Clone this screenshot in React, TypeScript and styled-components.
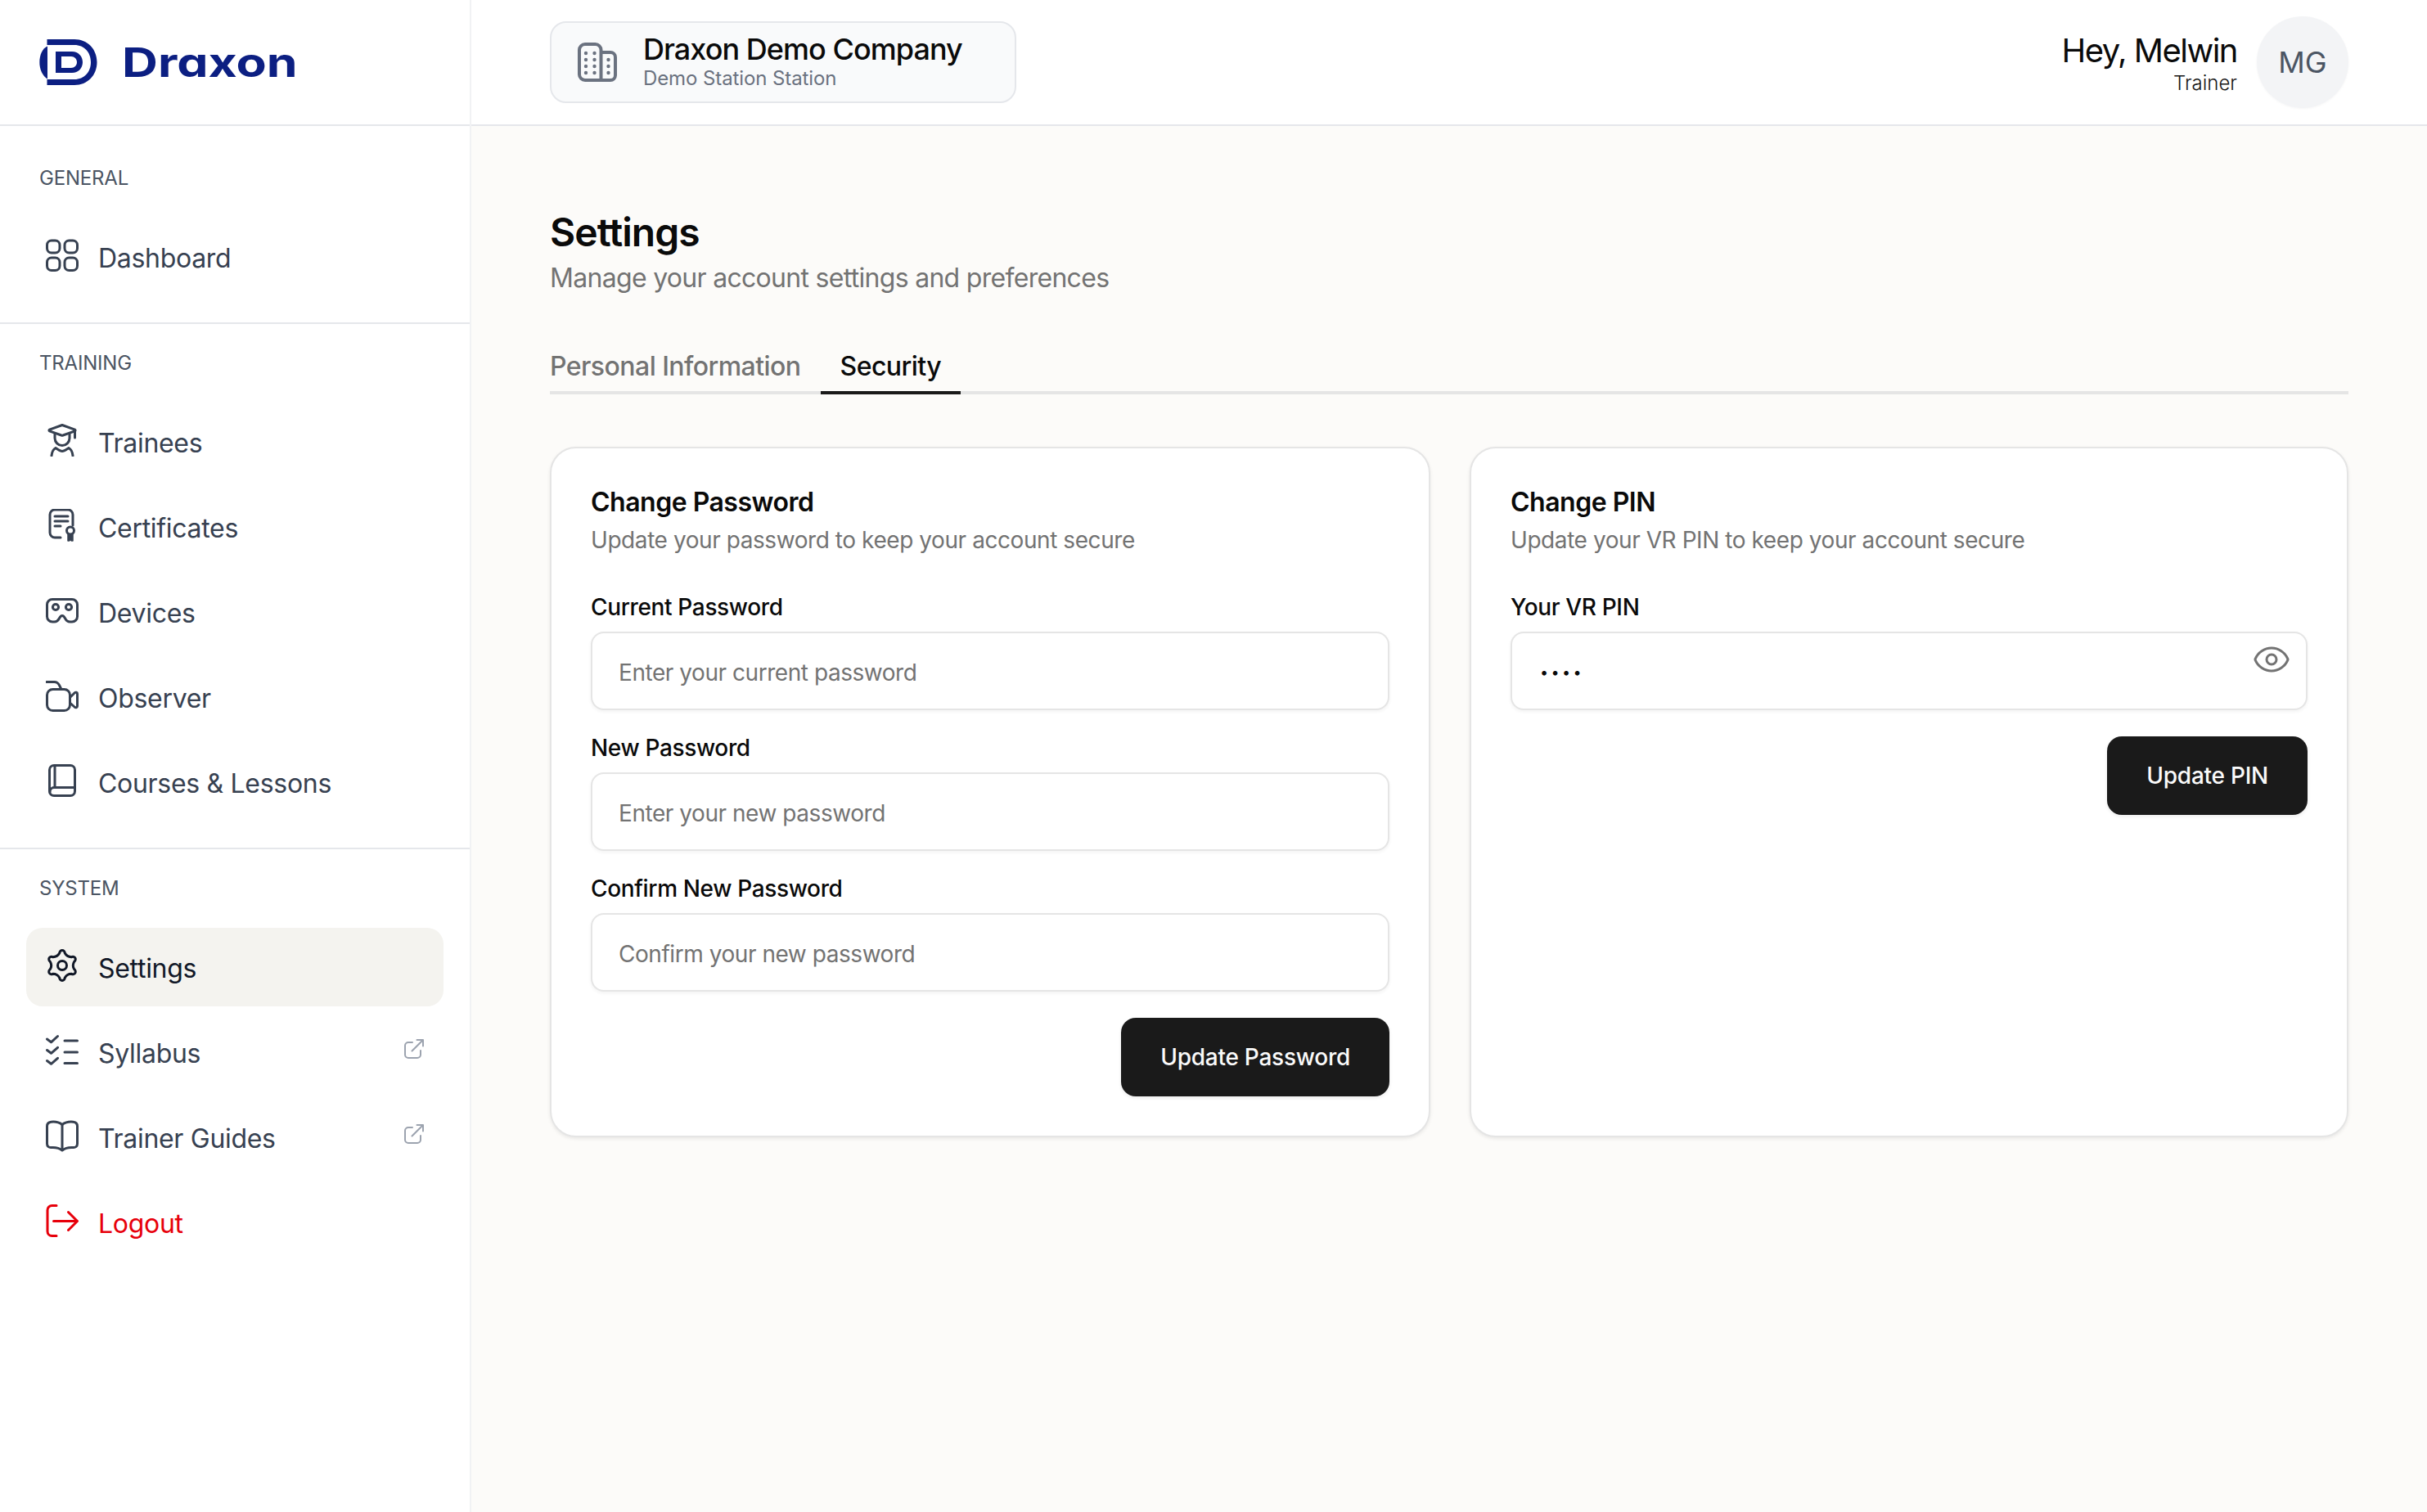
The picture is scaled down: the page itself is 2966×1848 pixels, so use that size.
import React from 'react';
import styled, { createGlobalStyle } from 'styled-components';
import { Eye } from 'lucide-react';

const GlobalStyle = createGlobalStyle`
  html, body {
    margin: 0;
    padding: 0;
    background: #ffffff;
  }
  body {
    font-family: Inter, "Liberation Sans", sans-serif;
    color: #0a0a0a;
  }
  * {
    box-sizing: border-box;
  }
`;

const polar = (r: number, deg: number) => {
  const a = (deg * Math.PI) / 180;
  return [20 + r * Math.cos(a), 20 + r * Math.sin(a)];
};

// six rounded lobes joined by shallow valleys
const gearPath = () => {
  const fmt = (p: number[]) => `${p[0].toFixed(2)} ${p[1].toFixed(2)}`;
  const tip = 3.2;
  const mid = 15.2;
  let d = '';
  for (let i = 0; i < 6; i++) {
    const deg = -90 + i * 60;
    const [cx, cy] = polar(mid, deg);
    const perp = ((deg + 90) * Math.PI) / 180;
    const dx = tip * Math.cos(perp);
    const dy = tip * Math.sin(perp);
    const start = [cx - dx, cy - dy];
    const end = [cx + dx, cy + dy];
    d += i === 0 ? `M${fmt(start)}` : `L${fmt(start)}`;
    d += `A${tip} ${tip} 0 0 1 ${fmt(end)}`;
    d += `Q${fmt(polar(11.8, deg + 30))} `;
    const nextDeg = deg + 60;
    const [nx, ny] = polar(mid, nextDeg);
    const nextPerp = ((nextDeg + 90) * Math.PI) / 180;
    d += `${(nx - tip * Math.cos(nextPerp)).toFixed(2)} ${(ny - tip * Math.sin(nextPerp)).toFixed(2)}`;
  }
  return `${d}Z`;
};

const Glyph = styled.svg`
  width: 40px;
  height: 40px;
  flex: none;
  margin-bottom: 8px;
  fill: none;
  stroke: currentColor;
  stroke-width: 3;
  stroke-linecap: round;
  stroke-linejoin: round;
`;

const DashboardIcon = () => (
  <Glyph viewBox="0 0 40 40">
    <rect x="1.5" y="2" width="15.5" height="15" rx="5.5" />
    <rect x="23" y="2" width="15.5" height="15" rx="5.5" />
    <rect x="1.5" y="23" width="15.5" height="15.5" rx="5.5" />
    <rect x="23" y="23" width="15.5" height="15.5" rx="5.5" />
  </Glyph>
);

const TraineesIcon = () => (
  <Glyph viewBox="0 0 40 40">
    <path d="M20 1.5 35.5 7.2c.8.4.8 1.2 0 1.6L21 14c-.7.2-1.3.2-2 0L4.5 8.8c-.8-.4-.8-1.2 0-1.6L20 1.5Z" />
    <path d="M35.5 8v9" />
    <path d="M11 12.5v5a9 9 0 0 0 18 0v-5" />
    <path d="M7 39c.4-4 2.200-8 5-9.500 2.800 1.800 5.500 4 8 4s5.200-2.200 8-4c2.800 1.500 4.600 5.500 5 9.500" />
  </Glyph>
);

const CertificatesIcon = () => (
  <Glyph viewBox="0 0 40 40">
    <path d="M18 35H11a6 6 0 0 1-6-6V7a6 6 0 0 1 6-6h16a6 6 0 0 1 6 6v13" />
    <path d="M11 9h16M11 15h16M11 21h7" />
    <circle cx="30" cy="26.5" r="4.5" />
    <path d="M27 31v8h1.6l1.4-1.6 1.4 1.6H33v-8" fill="currentColor" strokeWidth="1.5" />
  </Glyph>
);

const DevicesIcon = () => (
  <Glyph viewBox="0 0 40 40">
    <path d="M8 6.5h24a6.5 6.5 0 0 1 6.5 6.5v14.5a6.5 6.5 0 0 1-6.5 6.5h-2.5c-3 0-4.6-1.7-5.8-4-1-2-2.1-3.5-3.7-3.5s-2.7 1.5-3.7 3.5c-1.2 2.3-2.8 4-5.8 4H8a6.5 6.5 0 0 1-6.5-6.5V13A6.5 6.5 0 0 1 8 6.5Z" />
    <circle cx="12" cy="16" r="3.6" />
    <circle cx="28" cy="16" r="3.6" />
  </Glyph>
);

const ObserverIcon = () => (
  <Glyph viewBox="0 0 40 40">
    <path d="M1 3.5h9.5c2.6 0 4.6 1.4 6 4l2.5 5" />
    <rect x="1.5" y="12.5" width="28" height="26" rx="7" />
    <path d="M29.5 22.5 35 17c1.4-1.4 3.5-.8 3.5 1v15c0 1.800-2.100 2.400-3.500 1l-5.500-5" />
  </Glyph>
);

const CoursesIcon = () => (
  <Glyph viewBox="0 0 40 40">
    <rect x="4.5" y="1.5" width="31" height="37" rx="5.5" />
    <path d="M11 2v26" />
    <path d="M5 34c0-3 2-5.5 5-5.5h25.5" />
  </Glyph>
);

const SettingsIcon = () => (
  <Glyph viewBox="0 0 40 40">
    <path d={gearPath()} />
    <circle cx="20" cy="20" r="5.5" />
  </Glyph>
);

const SyllabusIcon = () => (
  <Glyph viewBox="0 0 40 40">
    <path d="M1.5 6l5 3.8L14.5 2.5" />
    <path d="M1.5 19.5l5 3.8 8-7" />
    <path d="M1.5 32.5l5 3.8 8-7" />
    <path d="M23 8h15.5M23 22h15.5M23 35.5h15.5" />
  </Glyph>
);

const GuidesIcon = () => (
  <Glyph viewBox="0 0 40 40">
    <path d="M20 6.5C16 3.5 11 2.7 6.5 3.2 3.5 3.5 1.5 5.5 1.5 8.5V30c0 3 2.2 4.8 5 4.6 5-.4 9.5.2 13.5 3.4 4-3.2 8.5-3.8 13.5-3.4 2.8.2 5-1.6 5-4.6V8.5c0-3-2-5-5-5.3C29 2.7 24 3.5 20 6.5Z" />
    <path d="M20 6.5v31" />
  </Glyph>
);

const LogoutIcon = () => (
  <Glyph viewBox="0 0 40 40">
    <path d="M13 1.5H7.5A5.5 5.5 0 0 0 2 7v26a5.5 5.5 0 0 0 5.5 5.5H13" />
    <path d="M9.5 20.5h28M27.5 9.5l11 11-11 11" />
  </Glyph>
);

const ExternalGlyph = styled.svg`
  width: 24px;
  height: 24px;
  flex: none;
  margin-left: auto;
  margin-bottom: 12px;
  fill: none;
  stroke: #9ca3af;
  stroke-width: 2;
  stroke-linecap: round;
  stroke-linejoin: round;
`;

const ExternalIcon = () => (
  <ExternalGlyph viewBox="0 0 24 24">
    <path d="M10 4H5a4 4 0 0 0-4 4v11a4 4 0 0 0 4 4h11a4 4 0 0 0 4-4v-5" />
    <path d="M9.5 14.5 22.5 1.5M15.500 1H23v7.500" />
  </ExternalGlyph>
);

const LogoMark = () => (
  <svg width="72" height="58" viewBox="47 47 72 58" fill="#0c1f82" fillRule="evenodd">
    <path d="M57.5 48H91C107 48 118.5 60 118.5 76S107 104 91 104H57.5V97H91C103 97 111 88 111 76S103 55 91 55H57.5Z" />
    <path d="M58 56.5C52 59 48.3 67 48.3 76S52 93 58 96.5Z" />
    <path d="M68 63H88C96 63 101 69 101 76S96 89 88 89H68ZM75 69V83H87C91 83 94 80 94 76S91 69 87 69Z" />
  </svg>
);

const BuildingIcon = () => (
  <svg width="48" height="48" viewBox="0 0 48 48" fill="none" stroke="#6b7280" strokeWidth="4" strokeLinejoin="round">
    <path d="M28.5 46H9a7 7 0 0 1-7-7V9a7 7 0 0 1 7-7h12.5a7 7 0 0 1 7 7v37Z" />
    <path d="M28.5 12H40a6 6 0 0 1 6 6v22a6 6 0 0 1-6 6H28.5" />
    <g fill="#6b7280" stroke="none">
      {[13, 21, 29, 37].map((y) => (
        <React.Fragment key={y}>
          <circle cx="10" cy={y} r="2.2" />
          <circle cx="20.5" cy={y} r="2.2" />
        </React.Fragment>
      ))}
      {[21, 29, 37].map((y) => (
        <circle key={y} cx="37.5" cy={y} r="2.2" />
      ))}
    </g>
  </svg>
);

const Page = styled.div`
  display: grid;
  grid-template-columns: 576px 1fr;
  width: 100%;
  min-height: 1848px;
`;

const Sidebar = styled.aside`
  display: flex;
  flex-direction: column;
  background: #ffffff;
  border-right: 2px solid #f1f2f4;
`;

const Brand = styled.div`
  display: flex;
  align-items: center;
  gap: 30px;
  height: 154px;
  padding-left: 47px;
  border-bottom: 2px solid #e5e7eb;
`;

const BrandName = styled.span`
  display: inline-block;
  width: 209px;
  font-family: Inter, sans-serif;
  font-size: 49px;
  font-weight: 700;
  line-height: 1;
  color: #0c1f82;
  font-feature-settings: 'cv11' 1;
  transform: scaleX(1.24);
  transform-origin: left center;
  white-space: nowrap;
`;

const Section = styled.section<{ $first?: boolean; $last?: boolean }>`
  padding: ${({ $first }) => ($first ? '48px' : '32px')} 32px 32px;
  border-bottom: ${({ $last }) => ($last ? 'none' : '2px solid #e5e7eb')};
`;

const SectionLabel = styled.div`
  padding-left: 16px;
  margin-bottom: 32px;
  font-size: 24px;
  line-height: 32px;
  letter-spacing: -0.2px;
  color: #4b5563;
`;

const NavList = styled.nav`
  display: flex;
  flex-direction: column;
  gap: 8px;
`;

const NavItem = styled.a<{ $active?: boolean; $danger?: boolean }>`
  display: flex;
  align-items: center;
  gap: 24px;
  height: 96px;
  padding: 4px 24px 0;
  border-radius: 20px;
  font-size: 32px;
  line-height: 48px;
  letter-spacing: -0.3px;
  background: ${({ $active }) => ($active ? '#f4f3ef' : 'transparent')};
  color: ${({ $active, $danger }) => ($danger ? '#e7000b' : $active ? '#111827' : '#374151')};
`;

const Main = styled.div`
  display: flex;
  flex-direction: column;
  min-width: 0;
  background: #fcfbf9;
`;

const TopBar = styled.header`
  display: flex;
  align-items: center;
  justify-content: space-between;
  height: 154px;
  padding: 0 96px;
  background: #ffffff;
  border-bottom: 2px solid #e5e7eb;
`;

const CompanyCard = styled.div`
  display: flex;
  align-items: center;
  gap: 32px;
  width: 570px;
  height: 100px;
  padding: 0 32px;
  background: #f9fafb;
  border: 2px solid #e5e7eb;
  border-radius: 20px;
`;

const CompanyText = styled.div`
  display: flex;
  flex-direction: column;
`;

const CompanyName = styled.div`
  font-size: 36px;
  line-height: 40px;
  font-weight: 500;
  letter-spacing: -0.95px;
  color: #0a0a0a;
`;

const CompanySub = styled.div`
  font-size: 24px;
  line-height: 32px;
  letter-spacing: -0.1px;
  color: #6b7280;
`;

const UserBox = styled.div`
  display: flex;
  align-items: center;
  gap: 24px;
`;

const UserText = styled.div`
  padding-top: 3px;
  text-align: right;
`;

const UserGreeting = styled.div`
  font-size: 40px;
  line-height: 48px;
  font-weight: 400;
  letter-spacing: -1.5px;
  color: #0a0a0a;
`;

const UserRole = styled.div`
  font-size: 24px;
  line-height: 32px;
  font-weight: 300;
  color: #171717;
`;

const Avatar = styled.div`
  display: flex;
  align-items: center;
  justify-content: center;
  width: 112px;
  height: 112px;
  border-radius: 50%;
  background: #f3f4f6;
  box-shadow: 0 1px 3px rgba(0, 0, 0, 0.04);
  font-size: 36px;
  color: #4b5563;
`;

const Content = styled.main`
  padding: 98px 96px 96px;
`;

const PageTitle = styled.h1`
  margin: 0;
  font-size: 48px;
  line-height: 64px;
  font-weight: 600;
  letter-spacing: -0.95px;
  color: #0a0a0a;
`;

const PageSub = styled.p`
  margin: 0;
  font-size: 32px;
  line-height: 48px;
  letter-spacing: -0.7px;
  color: #737373;
`;

const TabList = styled.div`
  display: flex;
  margin-top: 46px;
  border-bottom: 4px solid #e5e5e5;
`;

const Tab = styled.div<{ $active?: boolean }>`
  padding: 14px 24px 6px;
  margin-bottom: -4px;
  font-size: 32px;
  line-height: 48px;
  font-weight: 500;
  letter-spacing: -0.55px;
  color: ${({ $active }) => ($active ? '#0a0a0a' : '#737373')};
  border-bottom: 4px solid ${({ $active }) => ($active ? '#1a1a1a' : 'transparent')};

  &:first-child {
    padding-left: 0;
  }
`;

const CardGrid = styled.div`
  display: grid;
  grid-template-columns: 1076px 1fr;
  gap: 48px;
  margin-top: 64px;
`;

const Card = styled.section`
  display: flex;
  flex-direction: column;
  padding: 48px;
  background: #ffffff;
  border: 2px solid #e5e5e5;
  border-radius: 32px;
  box-shadow: 0 2px 4px rgba(0, 0, 0, 0.08);
`;

const CardTitle = styled.h2`
  margin: 0 0 8px;
  font-size: 32px;
  line-height: 36px;
  font-weight: 600;
  letter-spacing: -0.5px;
  color: #0a0a0a;
`;

const CardSub = styled.p`
  margin: 0 0 48px;
  font-size: 28px;
  line-height: 40px;
  letter-spacing: -0.43px;
  color: #737373;
`;

const Form = styled.form`
  display: flex;
  flex-direction: column;
  gap: 32px;
`;

const Field = styled.label`
  display: flex;
  flex-direction: column;
  gap: 16px;
`;

const FieldLabel = styled.span`
  font-size: 28px;
  line-height: 28px;
  font-weight: 500;
  letter-spacing: -0.35px;
  color: #0a0a0a;
`;

const InputWrap = styled.div`
  position: relative;
`;

const TextInput = styled.input`
  display: block;
  width: 100%;
  height: 96px;
  padding: 3px 32px 0;
  background: #ffffff;
  border: 2px solid #e5e5e5;
  border-radius: 16px;
  box-shadow: 0 2px 4px rgba(0, 0, 0, 0.05);
  font-family: Inter, sans-serif;
  font-size: 28px;
  letter-spacing: -0.45px;
  color: #0a0a0a;
  outline: none;

  &::placeholder {
    color: #737373;
    opacity: 1;
  }
`;

const PinInput = styled(TextInput)`
  font-size: 18px;
  letter-spacing: 3.4px;
  padding-left: 34px;
`;

const EyeButton = styled.span`
  position: absolute;
  top: 10px;
  right: 20px;
  display: flex;
  color: #737373;
`;

const FormActions = styled.div`
  display: flex;
  justify-content: flex-end;
`;

const PrimaryButton = styled.button`
  height: 96px;
  padding: 0 48px;
  background: #1a1a1a;
  border: none;
  border-radius: 18px;
  box-shadow: 0 2px 4px rgba(0, 0, 0, 0.08);
  font-family: Inter, sans-serif;
  font-size: 28px;
  font-weight: 500;
  letter-spacing: -0.25px;
  color: #fafafa;
`;

const navSections = [
  { label: 'GENERAL', items: [{ name: 'Dashboard', icon: <DashboardIcon /> }] },
  {
    label: 'TRAINING',
    items: [
      { name: 'Trainees', icon: <TraineesIcon /> },
      { name: 'Certificates', icon: <CertificatesIcon /> },
      { name: 'Devices', icon: <DevicesIcon /> },
      { name: 'Observer', icon: <ObserverIcon /> },
      { name: 'Courses & Lessons', icon: <CoursesIcon /> },
    ],
  },
  {
    label: 'SYSTEM',
    items: [
      { name: 'Settings', icon: <SettingsIcon />, active: true },
      { name: 'Syllabus', icon: <SyllabusIcon />, external: true },
      { name: 'Trainer Guides', icon: <GuidesIcon />, external: true },
      { name: 'Logout', icon: <LogoutIcon />, danger: true },
    ],
  },
];

const passwordFields = [
  { label: 'Current Password', placeholder: 'Enter your current password' },
  { label: 'New Password', placeholder: 'Enter your new password' },
  { label: 'Confirm New Password', placeholder: 'Confirm your new password' },
];

export default function App() {
  return (
    <Page>
      <GlobalStyle />
      <Sidebar>
        <Brand>
          <LogoMark />
          <BrandName>Draxon</BrandName>
        </Brand>
        {navSections.map((section, index) => (
          <Section key={section.label} $first={index === 0} $last={index === navSections.length - 1}>
            <SectionLabel>{section.label}</SectionLabel>
            <NavList>
              {section.items.map((item: any) => (
                <NavItem key={item.name} $active={item.active} $danger={item.danger}>
                  {item.icon}
                  {item.name}
                  {item.external && <ExternalIcon />}
                </NavItem>
              ))}
            </NavList>
          </Section>
        ))}
      </Sidebar>

      <Main>
        <TopBar>
          <CompanyCard>
            <BuildingIcon />
            <CompanyText>
              <CompanyName>Draxon Demo Company</CompanyName>
              <CompanySub>Demo Station Station</CompanySub>
            </CompanyText>
          </CompanyCard>
          <UserBox>
            <UserText>
              <UserGreeting>Hey, Melwin</UserGreeting>
              <UserRole>Trainer</UserRole>
            </UserText>
            <Avatar>MG</Avatar>
          </UserBox>
        </TopBar>

        <Content>
          <PageTitle>Settings</PageTitle>
          <PageSub>Manage your account settings and preferences</PageSub>

          <TabList>
            <Tab>Personal Information</Tab>
            <Tab $active>Security</Tab>
          </TabList>

          <CardGrid>
            <Card>
              <CardTitle>Change Password</CardTitle>
              <CardSub>Update your password to keep your account secure</CardSub>
              <Form>
                {passwordFields.map((field) => (
                  <Field key={field.label}>
                    <FieldLabel>{field.label}</FieldLabel>
                    <TextInput type="password" placeholder={field.placeholder} />
                  </Field>
                ))}
                <FormActions>
                  <PrimaryButton type="button">Update Password</PrimaryButton>
                </FormActions>
              </Form>
            </Card>

            <Card>
              <CardTitle>Change PIN</CardTitle>
              <CardSub>Update your VR PIN to keep your account secure</CardSub>
              <Form>
                <Field>
                  <FieldLabel>Your VR PIN</FieldLabel>
                  <InputWrap>
                    <PinInput type="password" defaultValue="1234" />
                    <EyeButton>
                      <Eye size={48} strokeWidth={1.5} />
                    </EyeButton>
                  </InputWrap>
                </Field>
                <FormActions>
                  <PrimaryButton type="button">Update PIN</PrimaryButton>
                </FormActions>
              </Form>
            </Card>
          </CardGrid>
        </Content>
      </Main>
    </Page>
  );
}
